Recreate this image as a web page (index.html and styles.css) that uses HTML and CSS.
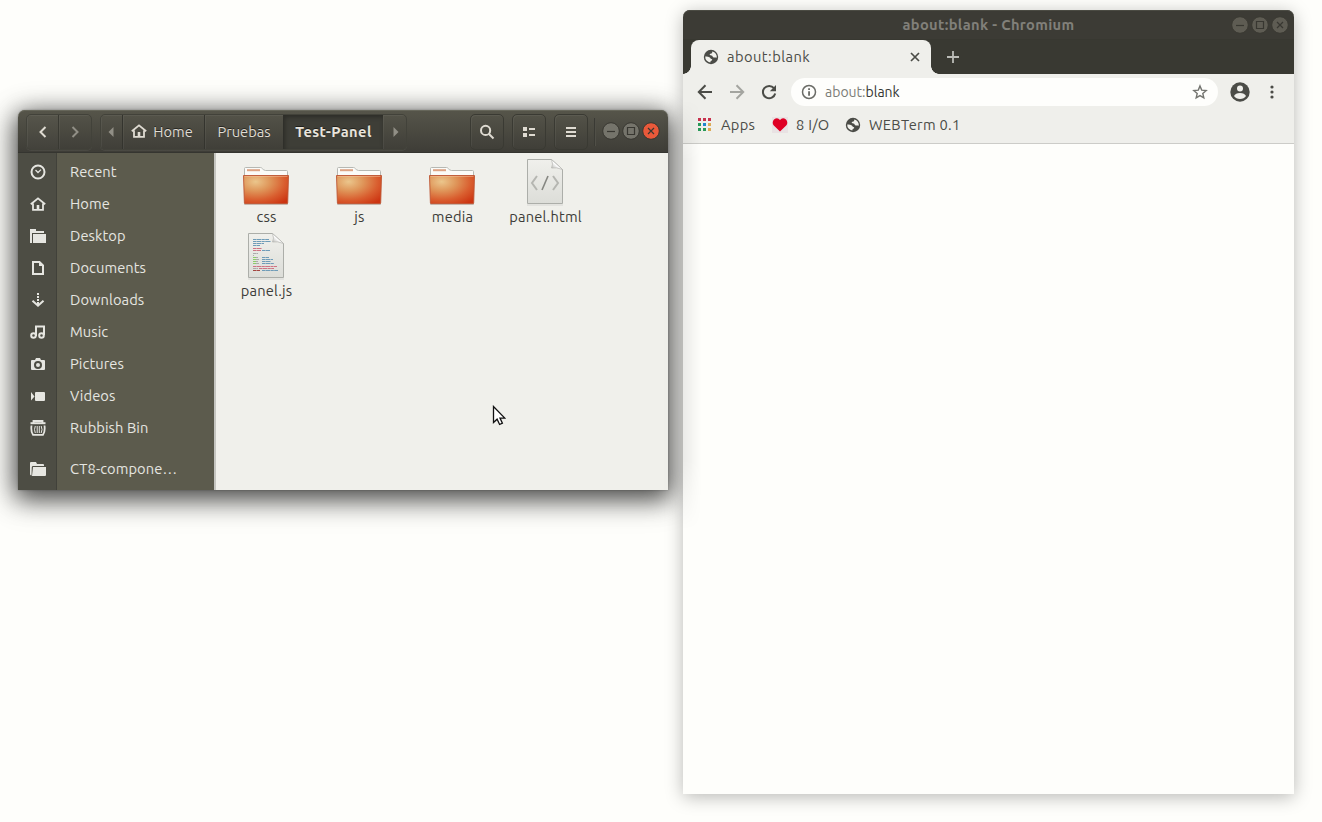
FILE: index.html
```html
<!DOCTYPE html>
<html lang="en">
<head>
<meta charset="utf-8">
<title>Desktop</title>
<link rel="stylesheet" href="styles.css">
</head>
<body>
<svg class="defs" width="0" height="0" aria-hidden="true">
  <defs>
    <radialGradient id="gOrange" cx=".27" cy=".22" r=".95"><stop offset="0" stop-color="#ebc68c"/><stop offset=".34" stop-color="#df965a"/><stop offset=".68" stop-color="#d95e2f"/><stop offset="1" stop-color="#cc3411"/></radialGradient>
    <linearGradient id="gPaper" x1="0" y1="0" x2="0" y2="1"><stop offset="0" stop-color="#f0f0ec"/><stop offset="1" stop-color="#dcddd8"/></linearGradient>
    <linearGradient id="gFold" x1="0" y1="1" x2="1" y2="0"><stop offset="0" stop-color="#a9aaa5"/><stop offset=".45" stop-color="#fff"/><stop offset="1" stop-color="#eee"/></linearGradient>
    <symbol id="house" viewBox="0 0 16 16"><path d="M.8 8.300 8 2.300l7.200 6M3 7.500v6.300h10V7.500" fill="none" stroke="currentColor" stroke-width="1.800"/><path d="M6.700 9h2.600v5H6.700z" fill="currentColor"/></symbol>
    <symbol id="folder" viewBox="0 0 48 48">
      <path d="M2 46.300h44" stroke="#000" stroke-opacity=".16" stroke-width="1.500"/>
      <path d="M2.500 18.500V10.500q0-1 1-1h15q1 0 2 1.300t3 1.700h21q1 0 1 1v5z" fill="#fbfbf8" stroke="#b6b8b3"/>
      <path d="M5 12.200h13" stroke="#dda384" stroke-width="2"/>
      <path d="M1.500 17.500h45L45.700 45q0 .7-.8.700H3.200q-.8 0-.8-.7z" fill="url(#gOrange)" stroke="#bc5431" stroke-width=".9"/>
      <path d="M2.500 18.500h43" stroke="#f5c49d" stroke-opacity=".5"/>
    </symbol>
    <symbol id="paper" viewBox="0 0 38 48">
      <path d="M1 47h36" stroke="#000" stroke-opacity=".1"/>
      <path d="M1.500 1.500h24l11 10v34h-35z" fill="url(#gPaper)" stroke="#acaea9"/>
      <path d="M25.500 1.500q2 5 0 8.500 5-1 11 1.500z" fill="url(#gFold)" stroke="#b4b5b0" stroke-width=".7"/>
    </symbol>
    <symbol id="globe" viewBox="0 0 16 16"><circle cx="8" cy="8" r="7.200" fill="#4b4c47"/><path d="M2.200 7.600c1.800-.3 3 .1 4.600.9 1 .6.500 1.400 1.600 1.500 1.200.2 1 1.500-.3 1.800-.6.200-.6.900-.8 1.800A5.800 5.800 0 0 1 2.200 7.600zM9.300 2.400c-.5.700.3 1.300-.4 1.800-.8.700-2.100.4-2.200 1.300-.2.900 1.700.5 2.500 1.300.8.900.5 1.700 1.600 1.800 1 .1 1.600-.6 3 .2A5.800 5.800 0 0 0 9.300 2.400z" fill="#f2f2ed"/></symbol>
  </defs>
</svg>

<main class="desktop">
  <section class="files">
    <header class="hbar">
      <div class="grp">
        <span class="btn back"><svg width="16" height="16" viewBox="0 0 16 16"><path d="M10.500 3 5.500 8l5 5" class="ln"/></svg></span>
        <span class="btn fwd dim"><svg width="16" height="16" viewBox="0 0 16 16"><path d="m5.500 3 5 5-5 5" class="ln"/></svg></span>
      </div>
      <nav class="grp path">
        <span class="btn arrow first dim"><svg width="6" height="12"><path d="M5.500 1v10L.5 6z" fill="currentColor"/></svg></span>
        <span class="btn p-home"><svg width="16" height="16"><use href="#house"/></svg><b>Home</b></span>
        <span class="btn p-pru"><b>Pruebas</b></span>
        <span class="btn p-test"><b>Test-Panel</b></span>
        <span class="btn arrow last dim"><svg width="6" height="12"><path d="M.5 1v10l5-5z" fill="currentColor"/></svg></span>
      </nav>
      <div class="tools">
        <span class="btn solo"><svg width="16" height="16" viewBox="0 0 16 16"><circle cx="6.600" cy="6.400" r="4.600" class="ln"/><path d="m10 10 4.500 4.500" class="ln"/></svg></span>
        <span class="btn solo"><svg width="16" height="16" viewBox="0 0 16 16"><path d="M2 3h4v4H2zM2 9h4v4H2zM8 4h6v2H8zM8 10h6v2H8z" fill="currentColor"/></svg></span>
        <span class="btn solo"><svg width="16" height="16" viewBox="0 0 16 16"><path d="M3 3h10v2H3zM3 7h10v2H3zM3 11h10v2H3z" fill="currentColor"/></svg></span>
      </div>
      <i class="vsep"></i>
      <div class="ctl">
        <svg width="18" height="18"><circle cx="9" cy="9" r="8.300"/><path d="M5 9.500h8"/></svg>
        <svg width="18" height="18"><circle cx="9" cy="9" r="8.300"/><path d="M5.500 5.500h7v7h-7z"/></svg>
        <svg class="red" width="18" height="18"><circle cx="9" cy="9" r="8.300"/><path d="m6 6 6 6m0-6-6 6"/></svg>
      </div>
    </header>
    <div class="body">
      <aside class="side">
        <div class="row"><i><svg width="16" height="16" viewBox="0 0 16 16"><circle cx="8" cy="8" r="6.500" class="ln"/><path d="m5.500 6 2.500 2.500L11 5.600" class="ln thin"/></svg></i><span>Recent</span></div>
        <div class="row"><i><svg width="16" height="16"><use href="#house"/></svg></i><span>Home</span></div>
        <div class="row"><i><svg width="16" height="16" viewBox="0 0 16 16"><path d="M0 1h6v2h8v2H2v10H0zM3 6h13v9H3z" fill="currentColor"/></svg></i><span>Desktop</span></div>
        <div class="row"><i><svg width="16" height="16" viewBox="0 0 16 16"><path d="M3 2h6.500L13 5.500V14H3z" class="ln"/><path d="M9 2v4h4z" fill="currentColor"/></svg></i><span>Documents</span></div>
        <div class="row"><i><svg width="16" height="16" viewBox="0 0 16 16"><path d="m2.500 8.700 5.500 5 5.500-5" class="ln"/><path d="M7 1h2v2H7zM7 4h2v2H7zM7 7h2v2H7zM7 10h2v3H7z" fill="currentColor"/></svg></i><span>Downloads</span></div>
        <div class="row"><i><svg width="16" height="16" viewBox="0 0 16 16"><path d="M6 12V2.500h8V11" class="ln"/><circle cx="3.500" cy="11.500" r="2.300" class="ln"/><circle cx="11.500" cy="11.500" r="2.300" class="ln"/></svg></i><span>Music</span></div>
        <div class="row"><i><svg width="16" height="16" viewBox="0 0 16 16"><path fill-rule="evenodd" d="M2 4h3l1-2h4l1 2h3q1 0 1 1v8q0 1-1 1H2q-1 0-1-1V5q0-1 1-1zm6 1a4 4 0 1 0 0 8 4 4 0 0 0 0-8z" fill="currentColor"/><circle cx="8" cy="9" r="2" fill="currentColor"/></svg></i><span>Pictures</span></div>
        <div class="row"><i><svg width="16" height="16" viewBox="0 0 16 16"><path d="M6 4h8q1 0 1 1v7q0 1-1 1H6q-1 0-1-1V5q0-1 1-1zM1 4l3.500 4.500L1 12.500z" fill="currentColor"/></svg></i><span>Videos</span></div>
        <div class="row"><i><svg width="16" height="16" viewBox="0 0 16 16"><path d="M.5 3.200h15" class="ln"/><path d="M3.500 3V1h9v2M1.500 5.500q-.8 6 1.500 9.300h10q2.300-3.300 1.500-9.300" class="ln bin"/><path d="M5.300 6q-1.600 3.500 0 7M7.200 6v7M9.300 6v7M11.200 6q1.600 3.500 0 7" class="ln fine"/></svg></i><span>Rubbish Bin</span></div>
        <div class="row extra"><i><svg width="16" height="16" viewBox="0 0 16 16"><path d="M1 1h5l1 2h6q1 0 1 1v1H3Q2 5 1.800 6L1.500 14.500h-.5l-1-1V2q0-1 1-1zM3 6h13v8q0 1-1 1H2z" fill="currentColor"/></svg></i><span>CT8-compone…</span></div>
      </aside>
      <div class="grid">
        <figure><svg width="48" height="48"><use href="#folder"/></svg><figcaption>css</figcaption></figure>
        <figure><svg width="48" height="48"><use href="#folder"/></svg><figcaption>js</figcaption></figure>
        <figure><svg width="48" height="48"><use href="#folder"/></svg><figcaption>media</figcaption></figure>
        <figure><svg width="38" height="48" viewBox="0 0 38 48"><use href="#paper"/><path d="m11 18-5 7 5 7M27 18l5 7-5 7" fill="none" stroke="#b5b6b1" stroke-width="2"/><path d="m22 18-6 14" stroke="#858681" stroke-width="1.600"/></svg><figcaption>panel.html</figcaption></figure>
        <figure><svg width="38" height="48" viewBox="0 0 38 48"><use href="#paper"/><g fill="none" stroke-width="1" stroke-dasharray="3 .4 5 .4"><path d="M6 7.500h16M6 9.500h18M6 11.500h11M6 13.500h7M15 18.500h8M15 25.500h7M15 27.500h11M15 29.500h9M15 31.500h12M15 38.500h16" stroke="#6f9cb8"/><path d="M6 16.500h9M6 18.500h8M6 34.500h24M12 36.500h15" stroke="#cf7383"/><path d="M6 21.500h5M6 23.500h1M9 25.500h2M9 27.500h3M9 29.500h2M9 31.500h3M6 36.500h5" stroke="#aaa"/><path d="M6 25.500h3M6 27.500h3M6 29.500h3M6 31.500h3" stroke="#8cce68"/><path d="M6 38.500h7" stroke="#a34540"/></g></svg><figcaption>panel.js</figcaption></figure>
      </div>
    </div>
  </section>

  <section class="chrome">
    <header class="title"><b>about:blank - Chromium</b>
      <div class="ctl dull">
        <svg width="18" height="18"><circle cx="9" cy="9" r="8.300"/><path d="M5 9.500h8"/></svg>
        <svg width="18" height="18"><circle cx="9" cy="9" r="8.300"/><path d="M5.500 5.500h7v7h-7z"/></svg>
        <svg width="18" height="18"><circle cx="9" cy="9" r="8.300"/><path d="m6 6 6 6m0-6-6 6"/></svg>
      </div>
    </header>
    <div class="tabs">
      <div class="tab"><svg width="16" height="16"><use href="#globe"/></svg><span>about:blank</span><svg class="x" width="10" height="10"><path d="m1 1 8 8m0-8-8 8" stroke="#4b4c47" stroke-width="1.700"/></svg></div>
      <svg class="plus" width="12" height="12"><path d="M6 0v12M0 6h12" stroke="#bbbcb7" stroke-width="1.800"/></svg>
    </div>
    <div class="bar">
      <svg width="16" height="16" viewBox="0 0 16 16"><path d="M15 8H2m6.500-6.700L1.800 8l6.700 6.700" class="dk"/></svg>
      <svg class="nf" width="16" height="16" viewBox="0 0 16 16"><path d="M1 8h13M7.500 1.300 14.200 8l-6.700 6.700" class="dk"/></svg>
      <svg class="nr" width="16" height="16" viewBox="0 0 16 16"><path d="M13 4.200A6.200 6.200 0 1 0 14.200 9.500" class="dk"/><path d="M15 1v6.200H8.800z" fill="#4b4c47"/></svg>
      <div class="url"><svg width="16" height="16" viewBox="0 0 16 16"><circle cx="8" cy="8" r="6.500" fill="none" stroke="#6a6b66" stroke-width="1.500"/><path d="M7.200 4.200h1.700v1.700H7.200zM7.200 7.200h1.700v4.600H7.200z" fill="#5f605b"/></svg><span><em>about:</em>blank</span>
        <svg class="star" width="16" height="16" viewBox="0 0 16 16"><path d="m8 1.900 1.700 4.200 4.500.4-3.400 3 1 4.400L8 11.600l-3.800 2.300 1-4.400-3.400-3 4.500-.4z" fill="none" stroke="#73746f" stroke-width="1.400"/></svg>
      </div>
      <svg class="user" width="20" height="20" viewBox="0 0 20 20"><circle cx="10" cy="10" r="9.700" fill="#4b4c47"/><circle cx="10" cy="6.500" r="3" fill="#efefeb"/><path d="M4 14q1.500-3 6-3t6 3q-2 3-6 3t-6-3z" fill="#efefeb"/></svg>
      <svg class="dots" width="4" height="14"><g fill="#4b4c47"><circle cx="2" cy="2" r="1.600"/><circle cx="2" cy="7" r="1.600"/><circle cx="2" cy="12" r="1.600"/></g></svg>
    </div>
    <div class="marks">
      <svg width="14" height="14"><path d="M0 0h3v3H0zM5 0h3v3H5zM10 0h3v3h-3z" fill="#c8324d"/><path d="M0 5h3v3H0zM0 10h3v3H0zM5 10h3v3H5z" fill="#299a59"/><path d="M5 5h3v3H5z" fill="#1e86d0"/><path d="M10 5h3v3h-3zM10 10h3v3h-3z" fill="#dcaa55"/></svg><span class="m1">Apps</span>
      <svg width="16" height="16"><path fill="#e9e2e3" d="M0 0h16v16H0z"/><path d="M8 14.500 1.800 8.500Q-.5 5.500 2 2.500 5.500 0 8 3q2.500-3 6-.5 2.500 3 .2 6z" fill="#df0024"/></svg><span class="m2">8 I/O</span>
      <svg width="16" height="16"><use href="#globe"/></svg><span class="m3">WEBTerm 0.1</span>
    </div>
    <div class="page"></div>
    <i class="shade"></i>
  </section>
  <svg class="cursor" width="14" height="22"><path d="M1.500 1.500v16l3.600-3.300 2.500 5.300 2.800-1.300-2.400-5.100h4.800z" fill="#fff" stroke="#111" stroke-width="1.300"/></svg>
</main>
</body>
</html>
```
FILE: styles.css
```css
* { box-sizing: border-box; }
body { margin: 0; background: #fefefb; font: 14.667px/20px "Ubuntu", "Noto Sans", "Open Sans", sans-serif; color: #3c3c38; }
svg { flex: none; display: block; }
.defs { position: absolute; }
.desktop { position: relative; width: 1322px; height: 822px; overflow: hidden; }
b, em, i { font-style: normal; }
.ln { fill: none; stroke: currentColor; stroke-width: 2; }
.ln.thin { stroke-width: 1.3; }
.ln.bin { stroke-width: 1.8; }
.ln.fine { stroke-width: 1; }

/* file manager */
.files { position: absolute; left: 18px; top: 110px; width: 650px; height: 380px; border-radius: 7px 7px 0 0; box-shadow: 0 0 2px rgba(0,0,0,.3), 0 6px 24px 2px rgba(0,0,0,.62), 0 7px 32px 3px rgba(0,0,0,.28); }
.hbar { display: flex; align-items: center; height: 43px; padding: 1px 8px 0 8px; border-radius: 7px 7px 0 0; background: linear-gradient(#56554a, #3e3d37); border-bottom: 1px solid #353530; box-shadow: inset 0 1px #66665a; color: #dfdbd2; }
.grp { display: flex; height: 36px; margin-right: 8px; border: 1px solid #42423a; border-radius: 5px; box-shadow: 0 1px rgba(255,255,255,.06); overflow: hidden; }
.btn { display: flex; align-items: center; justify-content: center; box-shadow: inset 1px 1px rgba(255,255,255,.05); }
.btn b { font-weight: 400; text-shadow: 0 -1px rgba(0,0,0,.5); }
.back { width: 31px; background: rgba(255,255,255,.02); }
.fwd { width: 33px; border-left: 1px solid #393932; }
.dim { color: #918f86; }
.first { width: 21px; padding-right: 2px; }
.last { width: 23px; padding-left: 2px; }
.p-home { width: 82px; border-left: 1px solid #34342e; gap: 6px; padding-right: 3px; }
.p-home svg { margin-bottom: 2px; }
.p-pru { width: 79px; border-left: 1px solid #34342e; }
.p-test { width: 100px; border-left: 1px solid #2f2f2a; background: #3e3e37; box-shadow: inset 1px 2px 4px #2c2c27; }
.path .p-test b { font-weight: 700; letter-spacing: .4px; color: #e8e4dc; }
.tools { display: flex; gap: 8px; margin-left: auto; }
.solo { width: 34px; height: 36px; border: 1px solid #3a3a33; border-radius: 5px; }
.vsep { width: 2px; height: 28px; margin: 0 6px; border-left: 1px solid #3a3a34; border-right: 1px solid #504f47; }
.ctl { display: flex; gap: 2px; margin-top: -1px; }
.ctl circle { fill: #75746b; stroke: #383731; }
.ctl path { fill: none; stroke: #383731; stroke-width: 1.2; }
.ctl .red circle { fill: #e9593a; }
.body { display: flex; height: 337px; }
.side { width: 198px; background: linear-gradient(90deg, #4d4d44 38px, #41413a 38px, #41413a 39px, #5c5b4d 39px); border-right: 2px solid #c5c5c0; padding-top: 3px; overflow: hidden; color: #e6e6e1; }
.row { display: flex; align-items: center; height: 32px; }
.row i { width: 39px; padding-left: 12px; }
.row span { margin-left: 13px; white-space: nowrap; letter-spacing: .08px; }
.extra { margin-top: 9px; }
.grid { flex: 1; display: grid; grid-template-columns: repeat(4, 93px); grid-auto-rows: 74px; align-content: start; padding: 5px 0 0 3px; background: #f0f0eb; }
figure { margin: 0; display: flex; flex-direction: column; align-items: center; }
figcaption { margin: 1px 0 0 2px; letter-spacing: .2px; color: #3c3c38; }

/* browser */
.chrome { position: absolute; left: 683px; top: 10px; width: 611px; height: 784px; display: flex; flex-direction: column; border-radius: 7px 7px 0 0; background: #efefeb; box-shadow: 0 3px 18px rgba(0,0,0,.28); color: #4b4c47; }
.title { position: relative; height: 30px; display: flex; justify-content: center; align-items: center; background: #3c3b35; border-radius: 7px 7px 0 0; border-bottom: 1px solid #383831; box-shadow: inset 0 1px #4b4b43; color: #81807a; }
.title b { letter-spacing: .33px; }
.title .ctl { position: absolute; right: 5px; top: 7px; }
.dull circle { fill: #5e5c53; stroke: #3a3932; }
.tabs { height: 34px; display: flex; align-items: center; background: #393932; padding-left: 8px; }
.tab { position: relative; width: 240px; height: 34px; display: flex; align-items: center; padding: 0 11px 0 12px; background: #efefeb; border-radius: 8px 8px 0 0; }
.tab::before, .tab::after { content: ""; position: absolute; bottom: 0; width: 8px; height: 8px; }
.tab::before { left: -8px; background: radial-gradient(circle at 0 0, transparent 7.5px, #efefeb 8px); }
.tab::after { right: -8px; background: radial-gradient(circle at 100% 0, transparent 7.5px, #efefeb 8px); }
.tab span { margin-left: 8px; letter-spacing: .45px; }
.x { margin-left: auto; }
.plus { margin-left: 16px; }
.bar { height: 36px; display: flex; align-items: center; padding-left: 14px; }
.dk { fill: none; stroke: #4b4c47; stroke-width: 2; }
.nf { margin-left: 16px; opacity: .45; }
.nr { margin-left: 16px; }
.url { width: 427px; height: 28px; margin-left: 14px; border-radius: 14px; background: #fefefc; display: flex; align-items: center; padding: 0 10px; }
.url span { margin-left: 8px; color: #353632; font-size: 14px; }
.url em { color: #7b7c77; }
.star { margin-left: auto; }
.user { margin-left: 12px; }
.dots { margin-left: 20px; }
.marks { height: 34px; display: flex; align-items: center; padding: 0 0 4px 15px; border-bottom: 1px solid #ccccc8; white-space: nowrap; }
.marks span { letter-spacing: .3px; }
.m1 { width: 35px; margin: 0 16px 0 9px; }
.m2 { width: 33px; margin: 0 16px 0 8px; }
.m3 { margin-left: 8px; }
.page { flex: 1; background: #fefefb; }
.shade { position: absolute; left: 0; top: 90px; width: 18px; height: 430px; background: linear-gradient(90deg, rgba(0,0,0,.08), transparent); mask-image: linear-gradient(transparent, #000 60px, #000 360px, transparent); }
.cursor { position: absolute; left: 492px; top: 405px; }
```
